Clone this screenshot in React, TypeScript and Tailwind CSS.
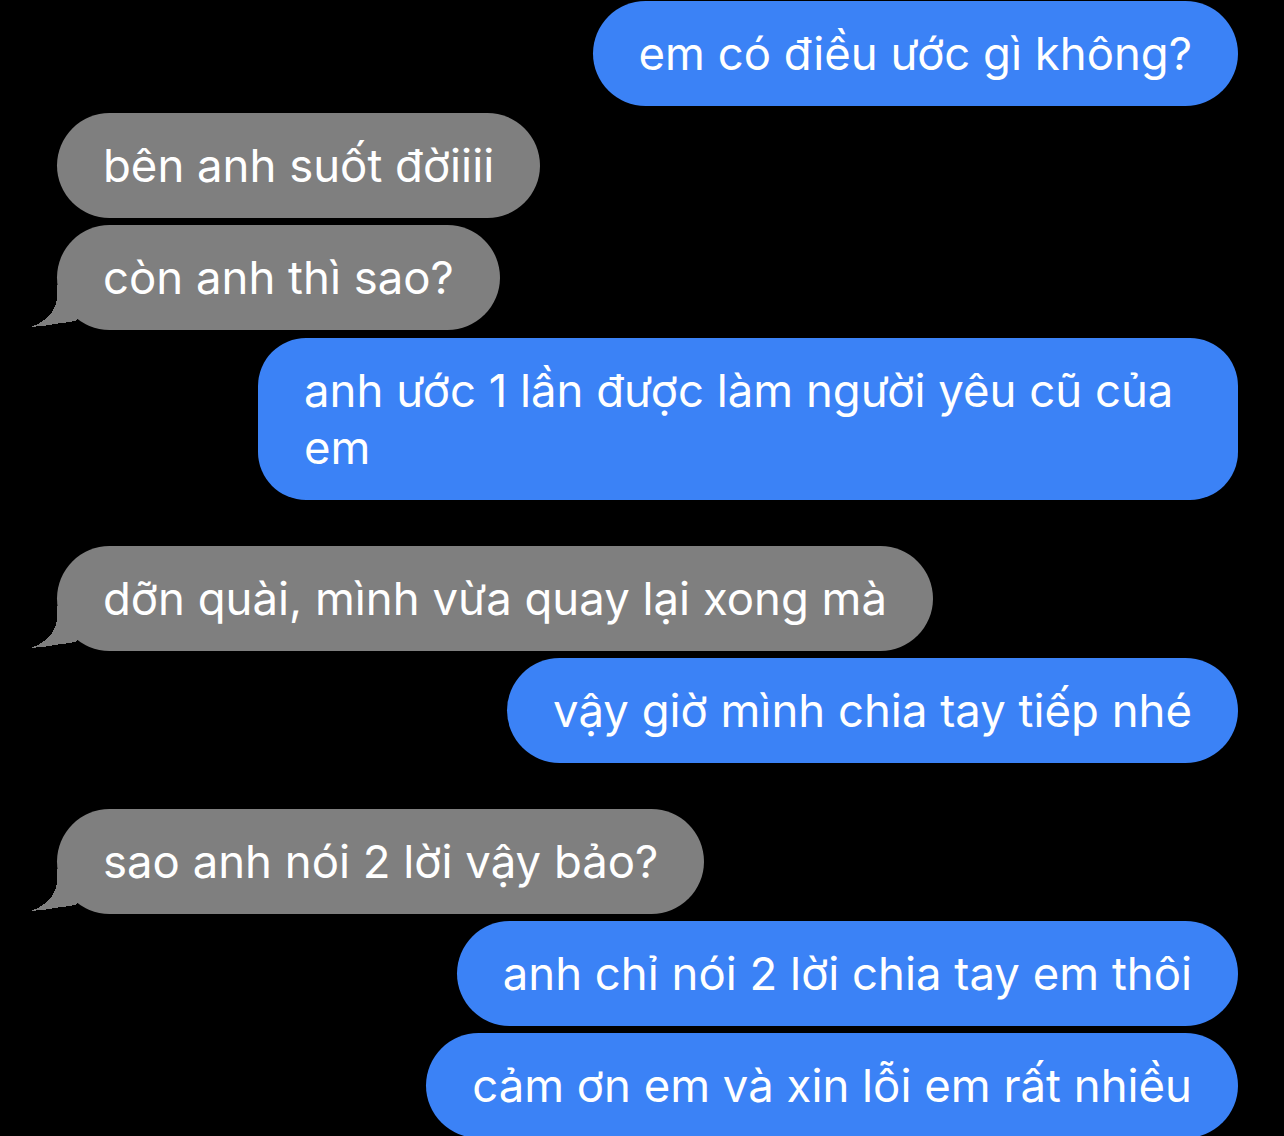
import React from 'react';

type Msg = {
    id: number;
    text: string;
    fromMe: boolean;
    tail?: boolean;
    gap: string;
    width?: string;
};

const messages: Msg[] = [
    { id: 1, text: 'em có điều ước gì không?', fromMe: true, gap: 'mt-px' },
    { id: 2, text: 'bên anh suốt đờiiii', fromMe: false, gap: 'mt-[7px]' },
    { id: 3, text: 'còn anh thì sao?', fromMe: false, tail: true, gap: 'mt-[7px]' },
    { id: 4, text: 'anh ước 1 lần được làm người yêu cũ của em', fromMe: true, gap: 'mt-[8px]', width: 'w-[980px]' },
    { id: 5, text: 'dỡn quài, mình vừa quay lại xong mà', fromMe: false, tail: true, gap: 'mt-[46px]' },
    { id: 6, text: 'vậy giờ mình chia tay tiếp nhé', fromMe: true, gap: 'mt-[7px]' },
    { id: 7, text: 'sao anh nói 2 lời vậy bảo?', fromMe: false, tail: true, gap: 'mt-[46px]' },
    { id: 8, text: 'anh chỉ nói 2 lời chia tay em thôi', fromMe: true, gap: 'mt-[7px]' },
    { id: 9, text: 'cảm ơn em và xin lỗi em rất nhiều', fromMe: true, gap: 'mt-[7px]' },
];

// little jagged tail under the grey bubbles
const Tail: React.FC = () => (
    <svg
        className="absolute left-[-26px] bottom-0"
        width="70"
        height="45"
        viewBox="0 0 70 45"
        shapeRendering="crispEdges"
    >
        <path d="M26 0 L26 10 C26 26 16 36 0 42 L20 40 L21 39 L32 38 L44 36 L60 24 L50 0 Z" fill="#7f7f7f" />
    </svg>
);

const Bubble: React.FC<{ msg: Msg }> = ({ msg }) => {
    const color = msg.fromMe ? 'bg-[#3b82f6]' : 'bg-[#7f7f7f]';
    const radius = msg.width ? 'rounded-[48px]' : 'rounded-[53px]';
    return (
        <div className={`flex ${msg.fromMe ? 'justify-end' : 'justify-start'} ${msg.gap}`}>
            <div className={`relative ${color} ${radius} ${msg.width ?? ''} px-[46px] py-6 text-white text-[45.5px] leading-[57px]`}>
                {msg.tail && <Tail />}
                <span className="relative">{msg.text}</span>
            </div>
        </div>
    );
};

export default function App() {
    return (
        <div className="w-[1284px] h-[1136px] overflow-hidden bg-black font-['Inter','Noto_Sans',sans-serif]">
            <div className="flex flex-col pl-[57px] pr-[46px]">
                {messages.map(m => (
                    <Bubble key={m.id} msg={m} />
                ))}
            </div>
        </div>
    );
}
